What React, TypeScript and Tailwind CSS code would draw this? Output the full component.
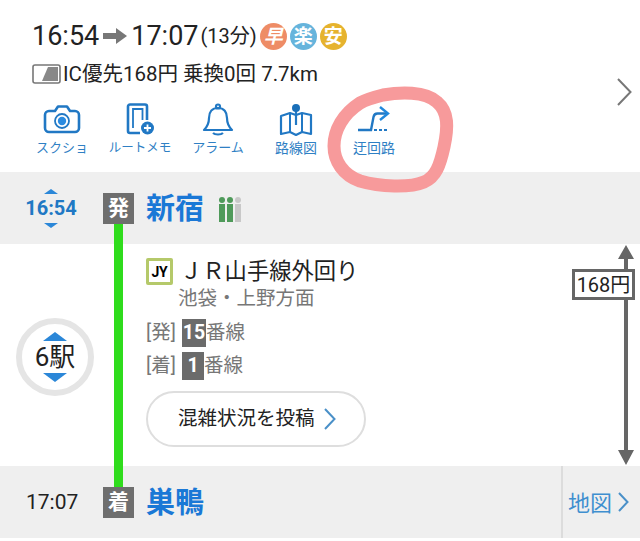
import type { ReactNode } from 'react';

const tabs: { label: string; icon: ReactNode; cls: string }[] = [
  {
    label: 'スクショ',
    cls: 'text-[13px]',
    icon: (
      <svg width="40" height="30" viewBox="0 0 40 30" fill="none" stroke="#2178c4" strokeWidth="2.6">
        <path d="M7 7h6l3-4.500h9l3 4.500h5a4 4 0 0 1 4 4v13a4 4 0 0 1-4 4H7a4 4 0 0 1-4-4V11a4 4 0 0 1 4-4z" strokeLinejoin="round" />
        <circle cx="20" cy="17" r="7" strokeWidth="1.8" />
        <circle cx="20" cy="17" r="4.200" fill="#2b8be0" stroke="none" />
      </svg>
    ),
  },
  {
    label: 'ルートメモ',
    cls: 'text-[12.5px]',
    icon: (
      <svg width="32" height="32" viewBox="0 0 32 32" fill="none" stroke="#2178c4">
        <path d="M16 30H6a2 2 0 0 1-2-2V3.500a2 2 0 0 1 2-2h15a2 2 0 0 1 2 2V17" strokeWidth="2.6" />
        <path d="M9 25V6h9.500v11" strokeWidth="1.8" />
        <circle cx="23.500" cy="25" r="6.500" fill="#2178c4" stroke="none" />
        <path d="M23.500 21.500v7M20 25h7" stroke="#fff" strokeWidth="1.800" />
      </svg>
    ),
  },
  {
    label: 'アラーム',
    cls: 'text-[13px]',
    icon: (
      <svg width="32" height="33" viewBox="0 0 32 33" fill="none" stroke="#2178c4" strokeWidth="2.2" strokeLinejoin="round">
        <circle cx="16" cy="3.500" r="2" />
        <path d="M16 5c-6 0-9 4-9 10 0 6-2 9-5 12h28c-3-3-5-6-5-12 0-6-3-10-9-10z" />
        <path d="M11 30c2 2 8 2 10 0" />
      </svg>
    ),
  },
  {
    label: '路線図',
    cls: 'text-[14px]',
    icon: (
      <svg width="34" height="33" viewBox="0 0 34 33" fill="none">
        <path d="M2 13l9-3 6 2 6-2 9 2v19l-9-2-6 3-6-3-9 2z" stroke="#2178c4" strokeWidth="2.2" strokeLinejoin="round" />
        <path d="M11 10v19M23 10v19" stroke="#2178c4" strokeWidth="2" />
        <path d="M17 6v16" stroke="#2178c4" strokeWidth="2.2" />
        <circle cx="17" cy="5" r="4" fill="#1a6fb8" />
      </svg>
    ),
  },
  {
    label: '迂回路',
    cls: 'text-[14px]',
    icon: (
      <svg width="34" height="28" viewBox="0 0 34 28" fill="none">
        <path d="M1 25h13l2.500-13c.4-2 2-3.500 4-3.500H31" stroke="#2178c4" strokeWidth="2.4" />
        <path d="M23 2l8 6.500-8 6.500" stroke="#2188dc" strokeWidth="2.4" />
        <path d="M17 25h15" stroke="#2178c4" strokeWidth="2.2" strokeDasharray="3 2" />
      </svg>
    ),
  },
];

function Triangle({ up, cls }: { up?: boolean; cls: string }) {
  return (
    <div
      className={`h-0 w-0 border-x-transparent ${cls} ${up ? 'border-b-[#2b87d8]' : 'border-t-[#2b87d8]'}`}
    />
  );
}

function Chevron({ w, h, color, sw = 2 }: { w: number; h: number; color: string; sw?: number }) {
  return (
    <svg width={w} height={h} viewBox={`0 0 ${w} ${h}`} fill="none" stroke={color} strokeWidth={sw}>
      <path d={`M1 1L${w - 1.5} ${h / 2}L1 ${h - 1}`} />
    </svg>
  );
}

function StopBadge({ text }: { text: string }) {
  return (
    <div className="mt-[1px] flex h-[31px] w-[31px] items-center justify-center bg-[#6e6e6e] text-[21px] font-bold text-white">
      {text}
    </div>
  );
}

function TrackRow({ tag, num, badgeCls }: { tag: string; num: string; badgeCls: string }) {
  return (
    <div className="flex h-[33px] items-center text-[19.5px] text-[#777]">
      <span className="w-[36px] whitespace-nowrap">[{tag}]</span>
      <span className={`flex h-[28px] items-center justify-center bg-[#6b6b6b] font-bold text-white ${badgeCls}`}>
        {num}
      </span>
      <span>番線</span>
    </div>
  );
}

export default function App() {
  return (
    <div
      className="relative h-[541px] w-[640px] overflow-hidden bg-white text-[#222]"
      style={{ fontFamily: 'Roboto, "Noto Sans CJK JP", sans-serif' }}
    >
      {/* Summary */}
      <div className="relative h-[172px] pt-[19px]">
        <div className="flex h-[34px] items-center pl-[32px]">
          <span className="text-[27px] leading-none">16:54</span>
          <svg width="26" height="18" viewBox="0 0 26 18" className="mx-[3px]" fill="#777">
            <path d="M1 6h13V1l11 8-11 8v-5H1z" />
          </svg>
          <span className="text-[27px] leading-none">17:07</span>
          <span className="ml-[2px] text-[20px] leading-none">(13分)</span>
          <div className="ml-[3px] flex gap-[3px]">
            <span className="flex h-[27px] w-[27px] items-center justify-center rounded-full bg-[#ee8c66] text-[19px] font-bold italic leading-none text-white">早</span>
            <span className="flex h-[27px] w-[27px] items-center justify-center rounded-full bg-[#66b4dc] text-[19px] font-bold leading-none text-white">楽</span>
            <span className="flex h-[27px] w-[27px] items-center justify-center rounded-full bg-[#e6b32e] text-[19px] font-bold leading-none text-white">安</span>
          </div>
        </div>
        <div className="mt-[4px] flex h-[34px] items-center pl-[32px] text-[20.5px] leading-none">
          <svg width="29" height="20" viewBox="0 0 29 20" className="mr-[2px]">
            <rect x="1" y="1" width="27" height="18" rx="2" fill="#fff" stroke="#777" strokeWidth="1.6" />
            <path d="M10 17l6-14h10v14z" fill="#888" />
          </svg>
          <span className="whitespace-pre">IC優先168円 乗換0回 7.7km</span>
        </div>
        <div className="mt-[11px] grid grid-cols-[repeat(5,78px)] pl-[23px]">
          {tabs.map((t) => (
            <div key={t.label} className="flex flex-col items-center">
              <div className="flex h-[34px] items-center">{t.icon}</div>
              <span className={`mt-[3px] whitespace-nowrap leading-[18px] text-[#2f80c4] ${t.cls}`}>{t.label}</span>
            </div>
          ))}
        </div>
        <div className="absolute right-[8px] top-[78px]">
          <Chevron w={15} h={28} color="#777" />
        </div>
      </div>

      {/* Departure */}
      <div className="flex h-[72px] items-center bg-[#efefef]">
        <div className="flex w-[103px] flex-col items-center pr-[1px]">
          <Triangle up cls="border-x-[7px] border-b-[5px]" />
          <span className="my-[3px] text-[20px] font-bold leading-[23px] text-[#2078c4]">16:54</span>
          <Triangle cls="border-x-[7px] border-t-[5px]" />
        </div>
        <StopBadge text="発" />
        <span className="ml-[12px] mt-[3px] text-[29px] font-bold leading-none text-[#1a78d6]">新宿</span>
        <svg width="24" height="25" viewBox="0 0 24 25" className="ml-[14px] mt-[2px]">
          <g fill="#4f9a5a">
            <circle cx="4" cy="3" r="3" />
            <rect x="1" y="7" width="6" height="18" />
            <circle cx="12" cy="3" r="3" />
            <rect x="9" y="7" width="6" height="18" />
          </g>
          <g fill="#c8c8c8">
            <circle cx="20" cy="3" r="3" />
            <rect x="17" y="7" width="6" height="18" />
          </g>
        </svg>
      </div>

      {/* Line detail */}
      <div className="relative flex h-[222px]">
        <div className="flex w-[146px] items-start pl-[16px] pt-[74px]">
          <div className="flex h-[78px] w-[78px] flex-col items-center justify-center rounded-full border-[6px] border-[#e5e5e5]">
            <Triangle up cls="border-x-[12px] border-b-[9px]" />
            <span className="my-[2px] text-[26px] leading-[28px]">6駅</span>
            <Triangle cls="border-x-[12px] border-t-[9px]" />
          </div>
        </div>
        <div className="pt-[14px]">
          <div className="flex h-[27px] items-center">
            <span className="flex h-[27px] w-[27px] items-center justify-center rounded-[2px] border-[3px] border-[#b5c96a] text-[14px] font-bold leading-none tracking-tight text-black">JY</span>
            <span className="ml-[7px] whitespace-nowrap text-[22.3px] leading-none">ＪＲ山手線外回り</span>
          </div>
          <div className="ml-[32px] mt-[1px] whitespace-nowrap text-[19.5px] leading-[26px] text-[#777]">池袋・上野方面</div>
          <div className="mt-[4px]">
            <TrackRow tag="発" num="15" badgeCls="w-[24px] ml-0" />
            <TrackRow tag="着" num="1" badgeCls="w-[22px] ml-0" />
          </div>
          <div className="mt-[9px] flex h-[56px] w-[220px] items-center rounded-full border-2 border-[#dedede] pl-[30px]">
            <span className="whitespace-nowrap text-[19.5px] leading-none">混雑状況を投稿</span>
            <span className="ml-[9px]">
              <Chevron w={12} h={22} color="#4a90c8" />
            </span>
          </div>
        </div>
      </div>

      {/* Arrival */}
      <div className="flex h-[72px] items-center bg-[#efefef]">
        <div className="w-[103px] pl-[26px] text-[21px] leading-none">17:07</div>
        <StopBadge text="着" />
        <span className="ml-[12px] mt-[3px] text-[29px] font-bold leading-none text-[#1a78d6]">巣鴨</span>
        <div className="ml-auto flex h-full w-[79px] items-center border-l-2 border-[#dcdcdc] pl-[5px]">
          <span className="mt-[3px] text-[22px] leading-none text-[#3f8fcf]">地図</span>
          <span className="ml-[6px]">
            <Chevron w={11} h={20} color="#4a90c8" />
          </span>
        </div>
      </div>

      {/* Route line */}
      <div className="absolute left-[114px] top-[224px] h-[263px] w-[9px] bg-[#2fdc1c]" />

      {/* Fare arrow */}
      <svg width="24" height="224" viewBox="0 0 24 224" className="absolute left-[614px] top-[243px]">
        <path d="M10 10h4v204h-4z" fill="#666" />
        <path d="M12 2l8 14H4zM12 222l-8-15h16z" fill="#666" />
      </svg>
      <div className="absolute left-[572px] top-[269px] flex h-[31px] w-[63px] items-center justify-center border-[3px] border-[#666] bg-white text-[20px] leading-none">
        168円
      </div>

      {/* Hand-drawn circle */}
      <svg width="640" height="541" viewBox="0 0 640 541" className="pointer-events-none absolute left-0 top-0" fill="none">
        <path
          d="M383 95C400 92 425 91 437 102C449 112 448 128 444 147C440 165 436 177 424 182C410 188 380 187 360 181C343 175 334 161 334 146C334 130 343 114 360 103C367 99 375 97 383 95Z"
          stroke="#f79a9b"
          strokeWidth="13"
        />
      </svg>
    </div>
  );
}
